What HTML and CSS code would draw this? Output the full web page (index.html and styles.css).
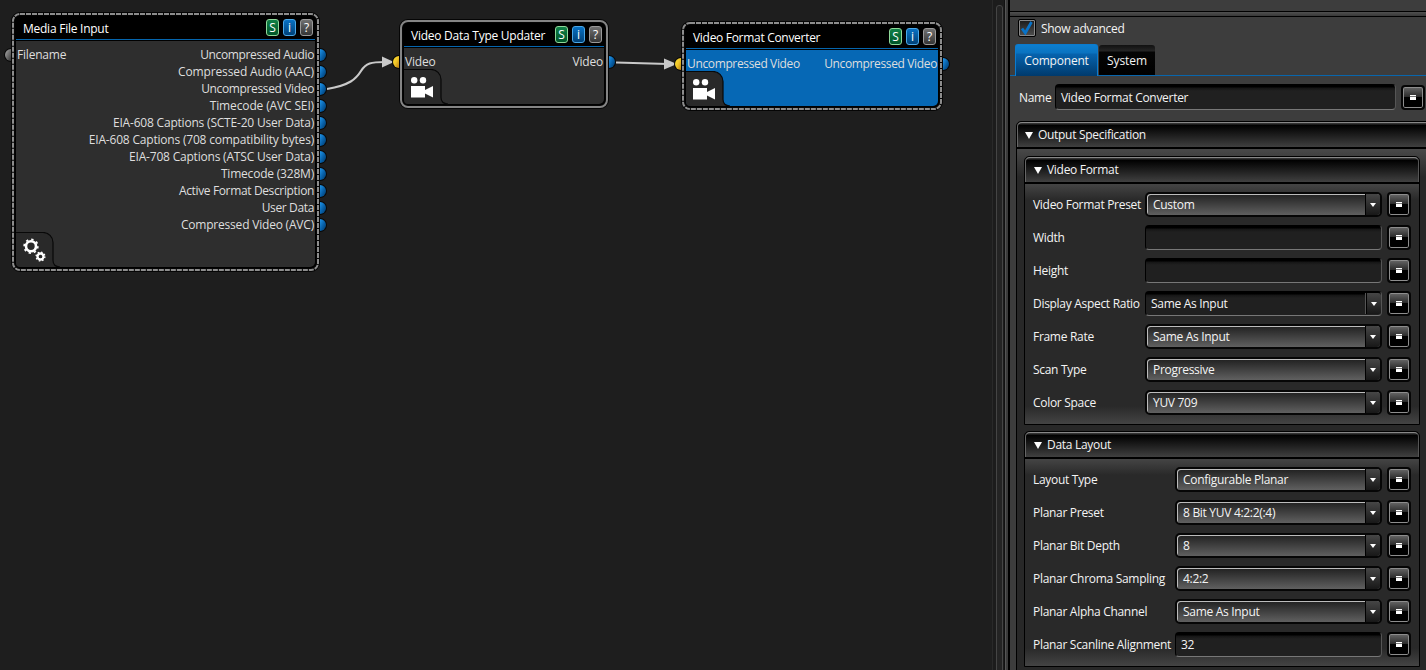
FILE: index.html
```html
<!DOCTYPE html>
<html lang="en">
<head>
<meta charset="utf-8">
<title>Workflow editor</title>
<link rel="stylesheet" href="styles.css">
</head>
<body>
<svg class="defs" width="0" height="0">
  <defs>
    <linearGradient id="blue" x1="0" y1="0" x2="1" y2="1"><stop offset="0" stop-color="#2196ea"/><stop offset=".5" stop-color="#0862ab"/><stop offset="1" stop-color="#003562"/></linearGradient>
    <linearGradient id="gold" x1="0" y1="0" x2="1" y2="1"><stop offset="0" stop-color="#ffe535"/><stop offset=".5" stop-color="#f0c528"/><stop offset="1" stop-color="#b87d10"/></linearGradient>
    <linearGradient id="gray" x1="0" y1="0" x2="1" y2="1"><stop offset="0" stop-color="#b0b0b0"/><stop offset="1" stop-color="#333"/></linearGradient>
    <symbol id="camera" viewBox="0 0 24 22"><circle cx="4.2" cy="3.3" r="3.2"/><circle cx="13" cy="3.3" r="3.2"/><path d="M1 9h14v4l8-4v11.5l-8-4v4H1z"/></symbol>
    <symbol id="out" viewBox="0 0 8 14"><path d="M0 0h1a7 7 0 0 1 0 14H0z" fill="#080808"/><path d="M0 1a6 6 0 0 1 0 12z" transform="translate(1 0)" fill="url(#blue)"/></symbol>
    <symbol id="in" viewBox="0 0 8 14"><path d="M8 0H7a7 7 0 0 0 0 14h1z" fill="#080808"/><path d="M7 1a6 6 0 0 0 0 12z"/></symbol>
    <symbol id="corner" viewBox="0 0 46 36"><path d="M0 .5h27a10 10 0 0 1 10 10v18q0 6 7 6.500H4q-4 0-4-4z" fill="#292929"/><path d="M0 .5h27a10 10 0 0 1 10 10v18q0 6 7 6.500" fill="none" stroke="#080808" stroke-width="1.2"/></symbol>
  </defs>
</svg>
<div class="app">
  <main class="canvas">
    <svg class="wires" width="992" height="670">
      <path d="M327 89C350 85 356 79 361 71C366 63 371 62 385 62"/><path class="head" d="M382 56.5L394 62L382 67.5z"/>
      <path d="M616 62.5L668 64"/><path class="head" d="M664 58.5L677 64L664 69.5z"/>
      <use href="#in" x="4" y="48" width="8" height="14" fill="url(#gray)"/>
      <use href="#in" x="392" y="55" width="8" height="14" fill="url(#gold)"/>
      <use href="#in" x="674" y="57" width="8" height="14" fill="url(#gold)"/>
      <use href="#out" x="319" y="48" width="8" height="14"/><use href="#out" x="319" y="65" width="8" height="14"/><use href="#out" x="319" y="82" width="8" height="14"/><use href="#out" x="319" y="99" width="8" height="14"/><use href="#out" x="319" y="116" width="8" height="14"/><use href="#out" x="319" y="133" width="8" height="14"/><use href="#out" x="319" y="150" width="8" height="14"/><use href="#out" x="319" y="167" width="8" height="14"/><use href="#out" x="319" y="184" width="8" height="14"/><use href="#out" x="319" y="201" width="8" height="14"/><use href="#out" x="319" y="218" width="8" height="14"/>
      <use href="#out" x="608" y="55" width="8" height="14"/>
      <use href="#out" x="942" y="57" width="8" height="14"/>
    </svg>

    <section class="node media">
      <svg class="frame" width="307" height="258"><rect class="rim" x="1" y="1" width="305" height="256" rx="7"/><rect class="dash" x="1" y="1" width="305" height="256" rx="7"/></svg>
      <header><span>Media File Input</span><b class="s">S</b><b class="i">i</b><b class="q">?</b></header>
      <div class="ports"><div><p>Filename</p></div><div class="outs"><p class="tight">Uncompressed Audio</p><p class="wide">Compressed Audio (AAC)</p><p class="tight">Uncompressed Video</p><p class="wide">Timecode (AVC SEI)</p><p>EIA-608 Captions (SCTE-20 User Data)</p><p>EIA-608 Captions (708 compatibility bytes)</p><p>EIA-708 Captions (ATSC User Data)</p><p>Timecode (328M)</p><p class="tight">Active Format Description</p><p class="tight">User Data</p><p>Compressed Video (AVC)</p></div></div>
      <svg class="corner" width="46" height="36"><use href="#corner" width="46" height="36"/>
        <g fill="none" stroke="#fff"><circle cx="15" cy="14.300" r="5" stroke-width="2.6"/><circle cx="15" cy="14.300" r="6.8" stroke-width="1.8" stroke-dasharray="2.3 3.04"/><circle cx="24.500" cy="24.500" r="3" stroke-width="2.3"/><circle cx="24.500" cy="24.500" r="4.4" stroke-width="1.3" stroke-dasharray="1.6 1.856"/></g></svg>
    </section>

    <section class="node updater">
      <svg class="frame" width="208" height="88"><rect class="rim" x="1" y="1" width="206" height="86" rx="7"/><rect class="solid" x="1" y="1" width="206" height="86" rx="7"/></svg>
      <header><span>Video Data Type Updater</span><b class="s">S</b><b class="i">i</b><b class="q">?</b></header>
      <div class="ports"><p>Video</p><p>Video</p></div>
      <svg class="corner" width="46" height="36"><use href="#corner" width="46" height="36"/><use href="#camera" x="6" y="8" width="24" height="22" fill="#fff"/></svg>
    </section>

    <section class="node converter">
      <svg class="frame" width="260" height="88"><rect class="rim" x="1" y="1" width="258" height="86" rx="7"/><rect class="dash" x="1" y="1" width="258" height="86" rx="7"/></svg>
      <header><span>Video Format Converter</span><b class="s">S</b><b class="i">i</b><b class="q">?</b></header>
      <div class="ports"><p class="tight">Uncompressed Video</p><p class="tight">Uncompressed Video</p></div>
      <svg class="corner" width="46" height="36"><use href="#corner" width="46" height="36"/><use href="#camera" x="6" y="8" width="24" height="22" fill="#fff"/></svg>
    </section>
  </main>

  <div class="scroll"><div class="thumb"></div></div>
  <div class="split"></div>

  <aside class="panel">
    <div class="bar"></div>
    <label class="advanced"><span class="check"><svg width="16" height="16" viewBox="0 0 16 16"><path d="M3 8.5L6.3 13L12.5 2" fill="none" stroke="#0873c9" stroke-width="2.8"/></svg></span>Show advanced</label>
    <nav class="tabs"><span class="tab active">Component</span><span class="tab">System</span></nav>
    <div class="name"><span>Name</span><div class="field">Video Format Converter</div><i class="mini"></i></div>
    <div class="group outer">
      <h2>Output Specification</h2>
      <div class="outer-body">
        <div class="group video">
          <h2>Video Format</h2>
          <div class="rows">
            <div class="row"><span>Video Format Preset</span><div class="combo">Custom<u></u></div><i class="mini"></i></div>
            <div class="row"><span>Width</span><div class="field"></div><i class="mini"></i></div>
            <div class="row"><span>Height</span><div class="field"></div><i class="mini"></i></div>
            <div class="row"><span>Display Aspect Ratio</span><div class="field edit">Same As Input<u></u></div><i class="mini"></i></div>
            <div class="row"><span>Frame Rate</span><div class="combo">Same As Input<u></u></div><i class="mini"></i></div>
            <div class="row"><span>Scan Type</span><div class="combo">Progressive<u></u></div><i class="mini"></i></div>
            <div class="row"><span>Color Space</span><div class="combo">YUV 709<u></u></div><i class="mini"></i></div>
          </div>
        </div>
        <div class="group data">
          <h2>Data Layout</h2>
          <div class="rows">
            <div class="row"><span>Layout Type</span><div class="combo">Configurable Planar<u></u></div><i class="mini"></i></div>
            <div class="row"><span>Planar Preset</span><div class="combo">8 Bit YUV 4:2:2(:4)<u></u></div><i class="mini"></i></div>
            <div class="row"><span>Planar Bit Depth</span><div class="combo">8<u></u></div><i class="mini"></i></div>
            <div class="row"><span>Planar Chroma Sampling</span><div class="combo">4:2:2<u></u></div><i class="mini"></i></div>
            <div class="row"><span>Planar Alpha Channel</span><div class="combo">Same As Input<u></u></div><i class="mini"></i></div>
            <div class="row"><span>Planar Scanline Alignment</span><div class="field">32</div><i class="mini"></i></div>
          </div>
        </div>
      </div>
    </div>
  </aside>
</div>
</body>
</html>
```

FILE: styles.css
```css
* { box-sizing: border-box; }
body { margin: 0; width: 1426px; height: 670px; overflow: hidden; background: #1e1e1e; color: #f4f4f4; font: 12px/17px "Open Sans", "Noto Sans", sans-serif; letter-spacing: -0.2px; }
p, h2 { margin: 0; font-size: 12px; font-weight: 400; white-space: nowrap; }
.defs { position: absolute; }
.app { display: flex; height: 670px; }
.canvas { position: relative; width: 992px; flex: none; background: #1e1e1e; }
.wires { position: absolute; left: 0; top: 0; }
.wires > path { fill: none; stroke: #c9c9c9; stroke-width: 2.2; }
.wires > path.head { fill: #c9c9c9; stroke: none; }

/* Nodes */
.node { position: absolute; padding: 4px; display: flex; flex-direction: column; }
.media { left: 12px; top: 13px; width: 307px; height: 258px; }
.updater { left: 400px; top: 20px; width: 208px; height: 88px; }
.converter { left: 682px; top: 22px; width: 260px; height: 88px; }
.frame { position: absolute; left: 0; top: 0; overflow: visible; }
.rim { fill: #000; stroke: #050505; stroke-width: 4; }
.dash { fill: none; stroke: #8d8d8d; stroke-width: 2; stroke-dasharray: 5 1; }
.solid { fill: none; stroke: #858585; stroke-width: 2; }
.node header { position: relative; flex: none; height: 23px; padding: 2px 2px 0 7px; display: flex; gap: 4px; border-bottom: 1px solid #0566ae; background: #000; border-radius: 4px 4px 0 0; color: #fff; letter-spacing: -0.25px; }
.converter header { letter-spacing: -0.3px; }
.node header span { flex: 1; white-space: nowrap; padding-top: 1px; }
.node header b { width: 13px; height: 17px; border: 1px solid; border-radius: 3px; font-weight: 400; line-height: 15px; text-align: center; letter-spacing: 0; }
.s { background: linear-gradient(#108047, #005528); border-color: #8fd99a !important; }
.i { background: linear-gradient(#0871c3, #004177); border-color: #4ba8e8 !important; }
.q { background: linear-gradient(#707070, #353535); border-color: #999 !important; }
.ports { position: relative; flex: 1; margin-top: 1px; padding: 5px 1px 0; display: flex; justify-content: space-between; background: #2e2e2e; color: #dedede; border-radius: 0 0 5px 5px; }
.outs { text-align: right; }
.tight { letter-spacing: -0.36px; }
.wide { letter-spacing: -0.14px; }
.converter .ports { background: #0668b5; }
.corner { position: absolute; left: 4px; bottom: 3px; }

/* Splitter */
.scroll { width: 12px; flex: none; padding: 5px 1px 0 3px; background: #1c1c1c; border-left: 1px solid #292929; }
.thumb { height: 680px; border: 1px solid #454545; border-radius: 3px; background: #242424; }
.split { width: 6px; flex: none; background: linear-gradient(90deg, #111 0 1px, #555 1px 2px, #3b3b3b 2px 4px, #000 4px 6px); }

/* Properties */
.panel { width: 416px; flex: none; background: #3d3d3d; overflow: hidden; padding-top: 11px; letter-spacing: -0.3px; }
.bar { height: 6px; border-top: 1px solid #000; border-bottom: 1px solid #000; background: linear-gradient(#505050, #383838); }
.advanced { display: flex; gap: 5px; height: 27px; padding: 2px 0 0 8px; line-height: 20px; }
.check { width: 18px; height: 18px; border: 1px solid #000; border-radius: 2px; background: linear-gradient(#191919, #505050); box-shadow: inset 0 0 0 1px #888; }
.check svg { display: block; }
.tabs { display: flex; height: 32px; padding-left: 5px; border-bottom: 1px solid #0866ad; }
.tab { height: 30px; margin-top: 1px; width: 56px; text-align: center; line-height: 32px; letter-spacing: -0.1px; background: linear-gradient(#111, #252525 6px, #050505 7px, #000); border-radius: 3px 3px 0 0; }
.tab.active { width: 83px; margin: 0 1px 0 0; height: 32px; line-height: 32px; letter-spacing: -0.2px; background: linear-gradient(#0c7fd0, #0a73c0 8px, #0663ae 9px, #003a6c); border: 1px solid #0b7bce; border-bottom: 0; }
.name { display: grid; grid-template-columns: 36px 341px 25px; height: 45px; padding: 8px 0 0 9px; line-height: 27px; }
.name span { white-space: nowrap; }
.name .field { width: 341px; height: 26px; line-height: 26px; }
.name .mini { margin: 1px 0 0 5px; }
.field { height: 25px; padding-left: 5px; line-height: 24px; background: linear-gradient(#000 0 2px, #151515 3px, #202020 6px); border: 1px solid #000; border-bottom-color: #777; border-right-color: #555; border-radius: 4px; white-space: nowrap; position: relative; }
.mini { position: relative; display: block; width: 24px; height: 25px; border: 2px solid #050505; border-radius: 4px; background: linear-gradient(#686868, #292929 48%, #000 50%); box-shadow: inset 0 0 0 1px #8d8d8d; }
.mini::after { content: ""; position: absolute; left: 7px; top: 8px; width: 6px; height: 5px; background: linear-gradient(#fff 0 1px, #777 1px 2px, #fff 2px); }
.group { border: 1px solid #000; border-radius: 5px 5px 0 0; }
.group h2 { height: 25px; padding-left: 8px; line-height: 24px; border-top: 1px solid #888; border-left: 1px solid #666; border-right: 1px solid #555; border-radius: 5px 5px 0 0; background: linear-gradient(#333 0 1px, #000 2px, #111 8px, #404040); box-shadow: 0 2px #000; position: relative; }
.group h2::before { content: ""; display: inline-block; border: 4px solid transparent; border-top: 7px solid #fff; border-bottom: 0; margin-right: 5px; }
.outer { width: 420px; height: 560px; margin-left: 6px; }
.outer > h2 { padding-left: 7px; }
.outer-body { height: 534px; padding: 9px 0 0 7px; background: linear-gradient(#4b4b4b, #282828 30px); }
.video, .data { width: 396px; }
.video { height: 269px; margin-bottom: 6px; }
.data { height: 236px; }
.rows { display: grid; grid-auto-rows: 33px; padding: 10px 0 0 8px; background: linear-gradient(#484848, #292929 18px, #292929 calc(100% - 18px), #444); }
.video .rows { height: 242px; }
.data .rows { height: 209px; }
.row { display: grid; grid-template-columns: 112px 237px 30px; line-height: 26px; white-space: nowrap; }
.data .row { grid-template-columns: 142px 207px 30px; }
.row .mini { margin: 0 0 0 5px; }
.combo { position: relative; height: 25px; padding-left: 6px; line-height: 22px; border: 2px solid #060606; border-radius: 5px; background: linear-gradient(#202020, #606060); box-shadow: inset 1px 1px #bcbcbc; }
u { position: absolute; right: 0; top: 0; width: 15px; height: 21px; border-left: 1px solid #000; background: linear-gradient(#464646, #181818); border-radius: 0 3px 3px 0; }
u::after { content: ""; position: absolute; left: 4px; top: 9px; border: 3.5px solid transparent; border-top: 4px solid #fff; border-bottom: 0; }
.edit u { top: 1px; box-shadow: -1px 0 #555; }
```
